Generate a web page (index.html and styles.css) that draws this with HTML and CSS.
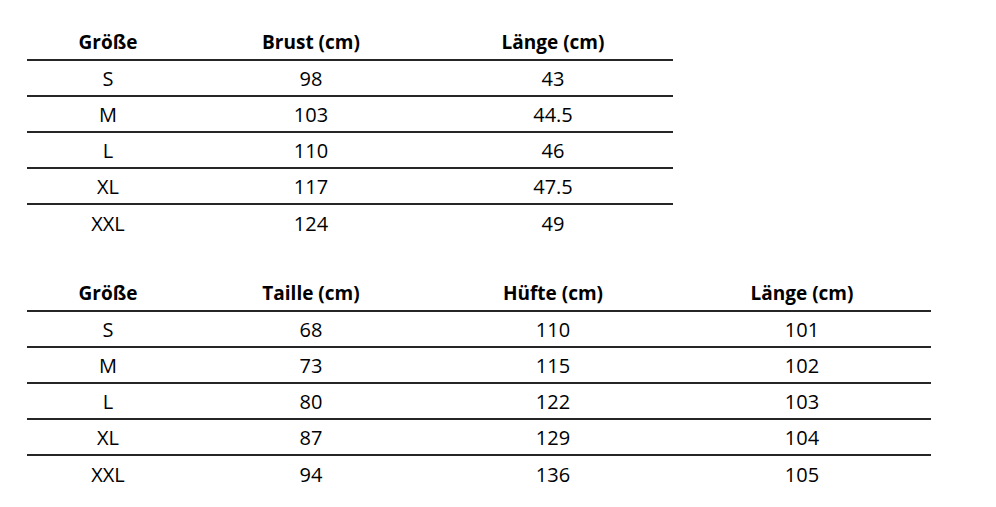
FILE: index.html
```html
<!DOCTYPE html>
<html lang="de">
<head>
<meta charset="utf-8">
<link rel="stylesheet" href="styles.css">
</head>
<body>
<div class="page">
  <div class="table t3">
    <div class="row head"><div>Größe</div><div>Brust (cm)</div><div>Länge (cm)</div></div>
    <div class="row"><div>S</div><div>98</div><div>43</div></div>
    <div class="row"><div>M</div><div>103</div><div>44.5</div></div>
    <div class="row"><div>L</div><div>110</div><div>46</div></div>
    <div class="row"><div>XL</div><div>117</div><div>47.5</div></div>
    <div class="row last"><div>XXL</div><div>124</div><div>49</div></div>
  </div>
  <div class="table t4">
    <div class="row head"><div>Größe</div><div>Taille (cm)</div><div>Hüfte (cm)</div><div>Länge (cm)</div></div>
    <div class="row"><div>S</div><div>68</div><div>110</div><div>101</div></div>
    <div class="row"><div>M</div><div>73</div><div>115</div><div>102</div></div>
    <div class="row"><div>L</div><div>80</div><div>122</div><div>103</div></div>
    <div class="row"><div>XL</div><div>87</div><div>129</div><div>104</div></div>
    <div class="row last"><div>XXL</div><div>94</div><div>136</div><div>105</div></div>
  </div>
</div>
</body>
</html>
```
FILE: styles.css
```css
html, body {
  margin: 0;
  padding: 0;
  background: #ffffff;
}
body {
  font-family: "Open Sans", "Noto Sans", sans-serif;
  font-size: 20px;
  color: #000000;
}
.page {
  padding: 25px 0 0 27px;
  display: flex;
  flex-direction: column;
  align-items: flex-start;
  gap: 35px;
}
.table {
  display: flex;
  flex-direction: column;
}
.row {
  display: grid;
  box-sizing: border-box;
  height: 36px;
  border-bottom: 2px solid #262626;
  align-items: center;
}
.row.last {
  border-bottom: none;
}
.t3 .row {
  grid-template-columns: 162px 244px 240px;
}
.t4 .row {
  grid-template-columns: 162px 244px 240px 258px;
}
.row > div {
  text-align: center;
  line-height: 34px;
  padding-top: 1px;
}
.head > div {
  font-weight: 700;
  font-size: 19px;
  padding-top: 0;
}
```
